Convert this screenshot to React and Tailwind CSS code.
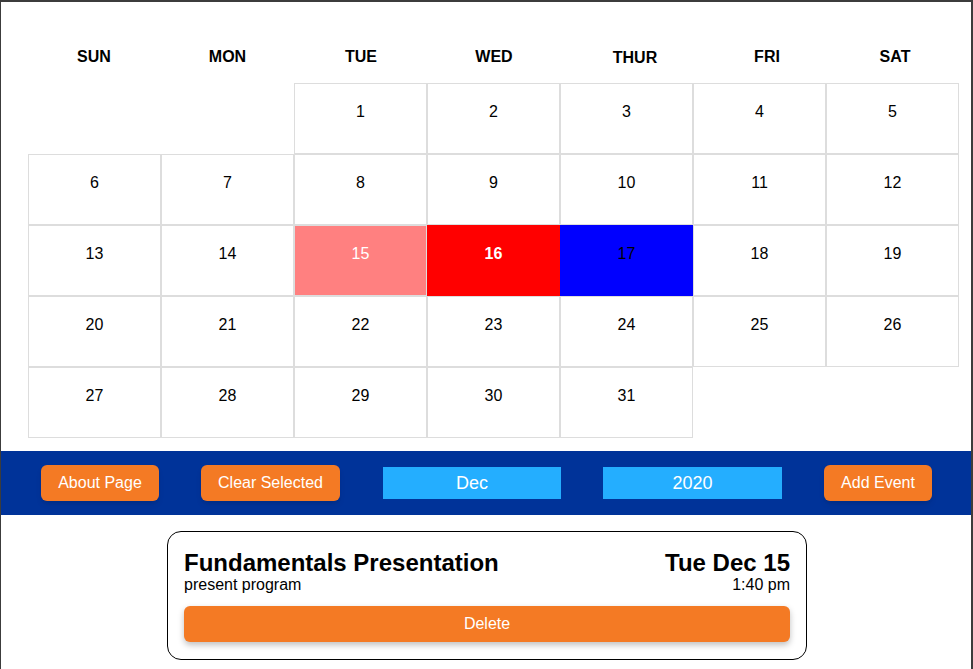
import React from "react";

const DAYS = ["SUN", "MON", "TUE", "WED", "THUR", "FRI", "SAT"];

// december 2020 starts on a tuesday
const cells = [null, null, ...Array.from({ length: 31 }, (_, i) => i + 1)];

function dayClass(d) {
  if (d === 15) return "bg-[#ff8080] text-white border-[#dddddd]";
  if (d === 16) return "bg-[#ff0000] text-white font-bold border-[#ff0000]";
  if (d === 17) return "bg-[#0000ff] text-black border-[#0000ff]";
  return "bg-white text-black border-[#dddddd]";
}

export default function App() {
  return (
    <div
      className="h-[669px] overflow-hidden border-t-2 border-l border-r-2 border-[#3c3c3c] bg-white"
      style={{ fontFamily: '"Liberation Sans", Arial, sans-serif' }}
    >
      <div className="pl-[26px] pt-[28px] grid grid-cols-[134px_133px_134px_132px_150px_114px_142px]">
        {DAYS.map((d) => (
          <div
            key={d}
            className={`h-[53px] flex items-center justify-center text-[16px] font-bold text-black ${d === "THUR" ? "pt-[2px]" : ""}`}
          >
            {d}
          </div>
        ))}
      </div>

      <div className="pl-[27px] pr-[12px]">
        <div className="grid grid-cols-[repeat(7,133px)]">
          {cells.map((d, i) =>
            d === null ? (
              <div key={"e" + i} className="h-[71px]" />
            ) : (
              <div
                key={d}
                className={`h-[71px] border text-center text-[16px] leading-[18px] pt-[19px] ${dayClass(d)}`}
              >
                {d}
              </div>
            )
          )}
        </div>
      </div>

      <div className="mt-[13px] h-[64px] bg-[#003399] flex items-center gap-[42px] pl-[40px] text-white">
        <button className="w-[118px] h-[36px] rounded-[6px] bg-[#f47a24] text-[16px] shadow-md">About Page</button>
        <button className="w-[139px] h-[36px] rounded-[6px] bg-[#f47a24] text-[16px] shadow-md">Clear Selected</button>
        <div className="ml-[1px] w-[178px] h-[32px] bg-[#24aeff] flex items-center justify-center text-[18px]">Dec</div>
        <div className="w-[179px] h-[32px] bg-[#24aeff] flex items-center justify-center text-[18px]">2020</div>
        <button className="w-[108px] h-[36px] rounded-[6px] bg-[#f47a24] text-[16px] shadow-md">Add Event</button>
      </div>

      <div className="mt-[16px] ml-[166px] w-[640px] rounded-[14px] border border-black px-[16px] pt-[17px] pb-[17px]">
        <div className="flex justify-between">
          <div>
            <div className="text-[24px] font-bold leading-[27px] text-black">Fundamentals Presentation</div>
            <div className="text-[16px] leading-[18px] text-black">present program</div>
          </div>
          <div className="text-right">
            <div className="text-[24px] font-bold leading-[27px] text-black">Tue Dec 15</div>
            <div className="text-[16px] leading-[18px] text-black">1:40 pm</div>
          </div>
        </div>
        <button className="mt-[12px] w-full h-[36px] rounded-[6px] bg-[#f47a24] text-white text-[16px] shadow-[0_3px_6px_rgba(0,0,0,0.25)]">
          Delete
        </button>
      </div>
    </div>
  );
}
